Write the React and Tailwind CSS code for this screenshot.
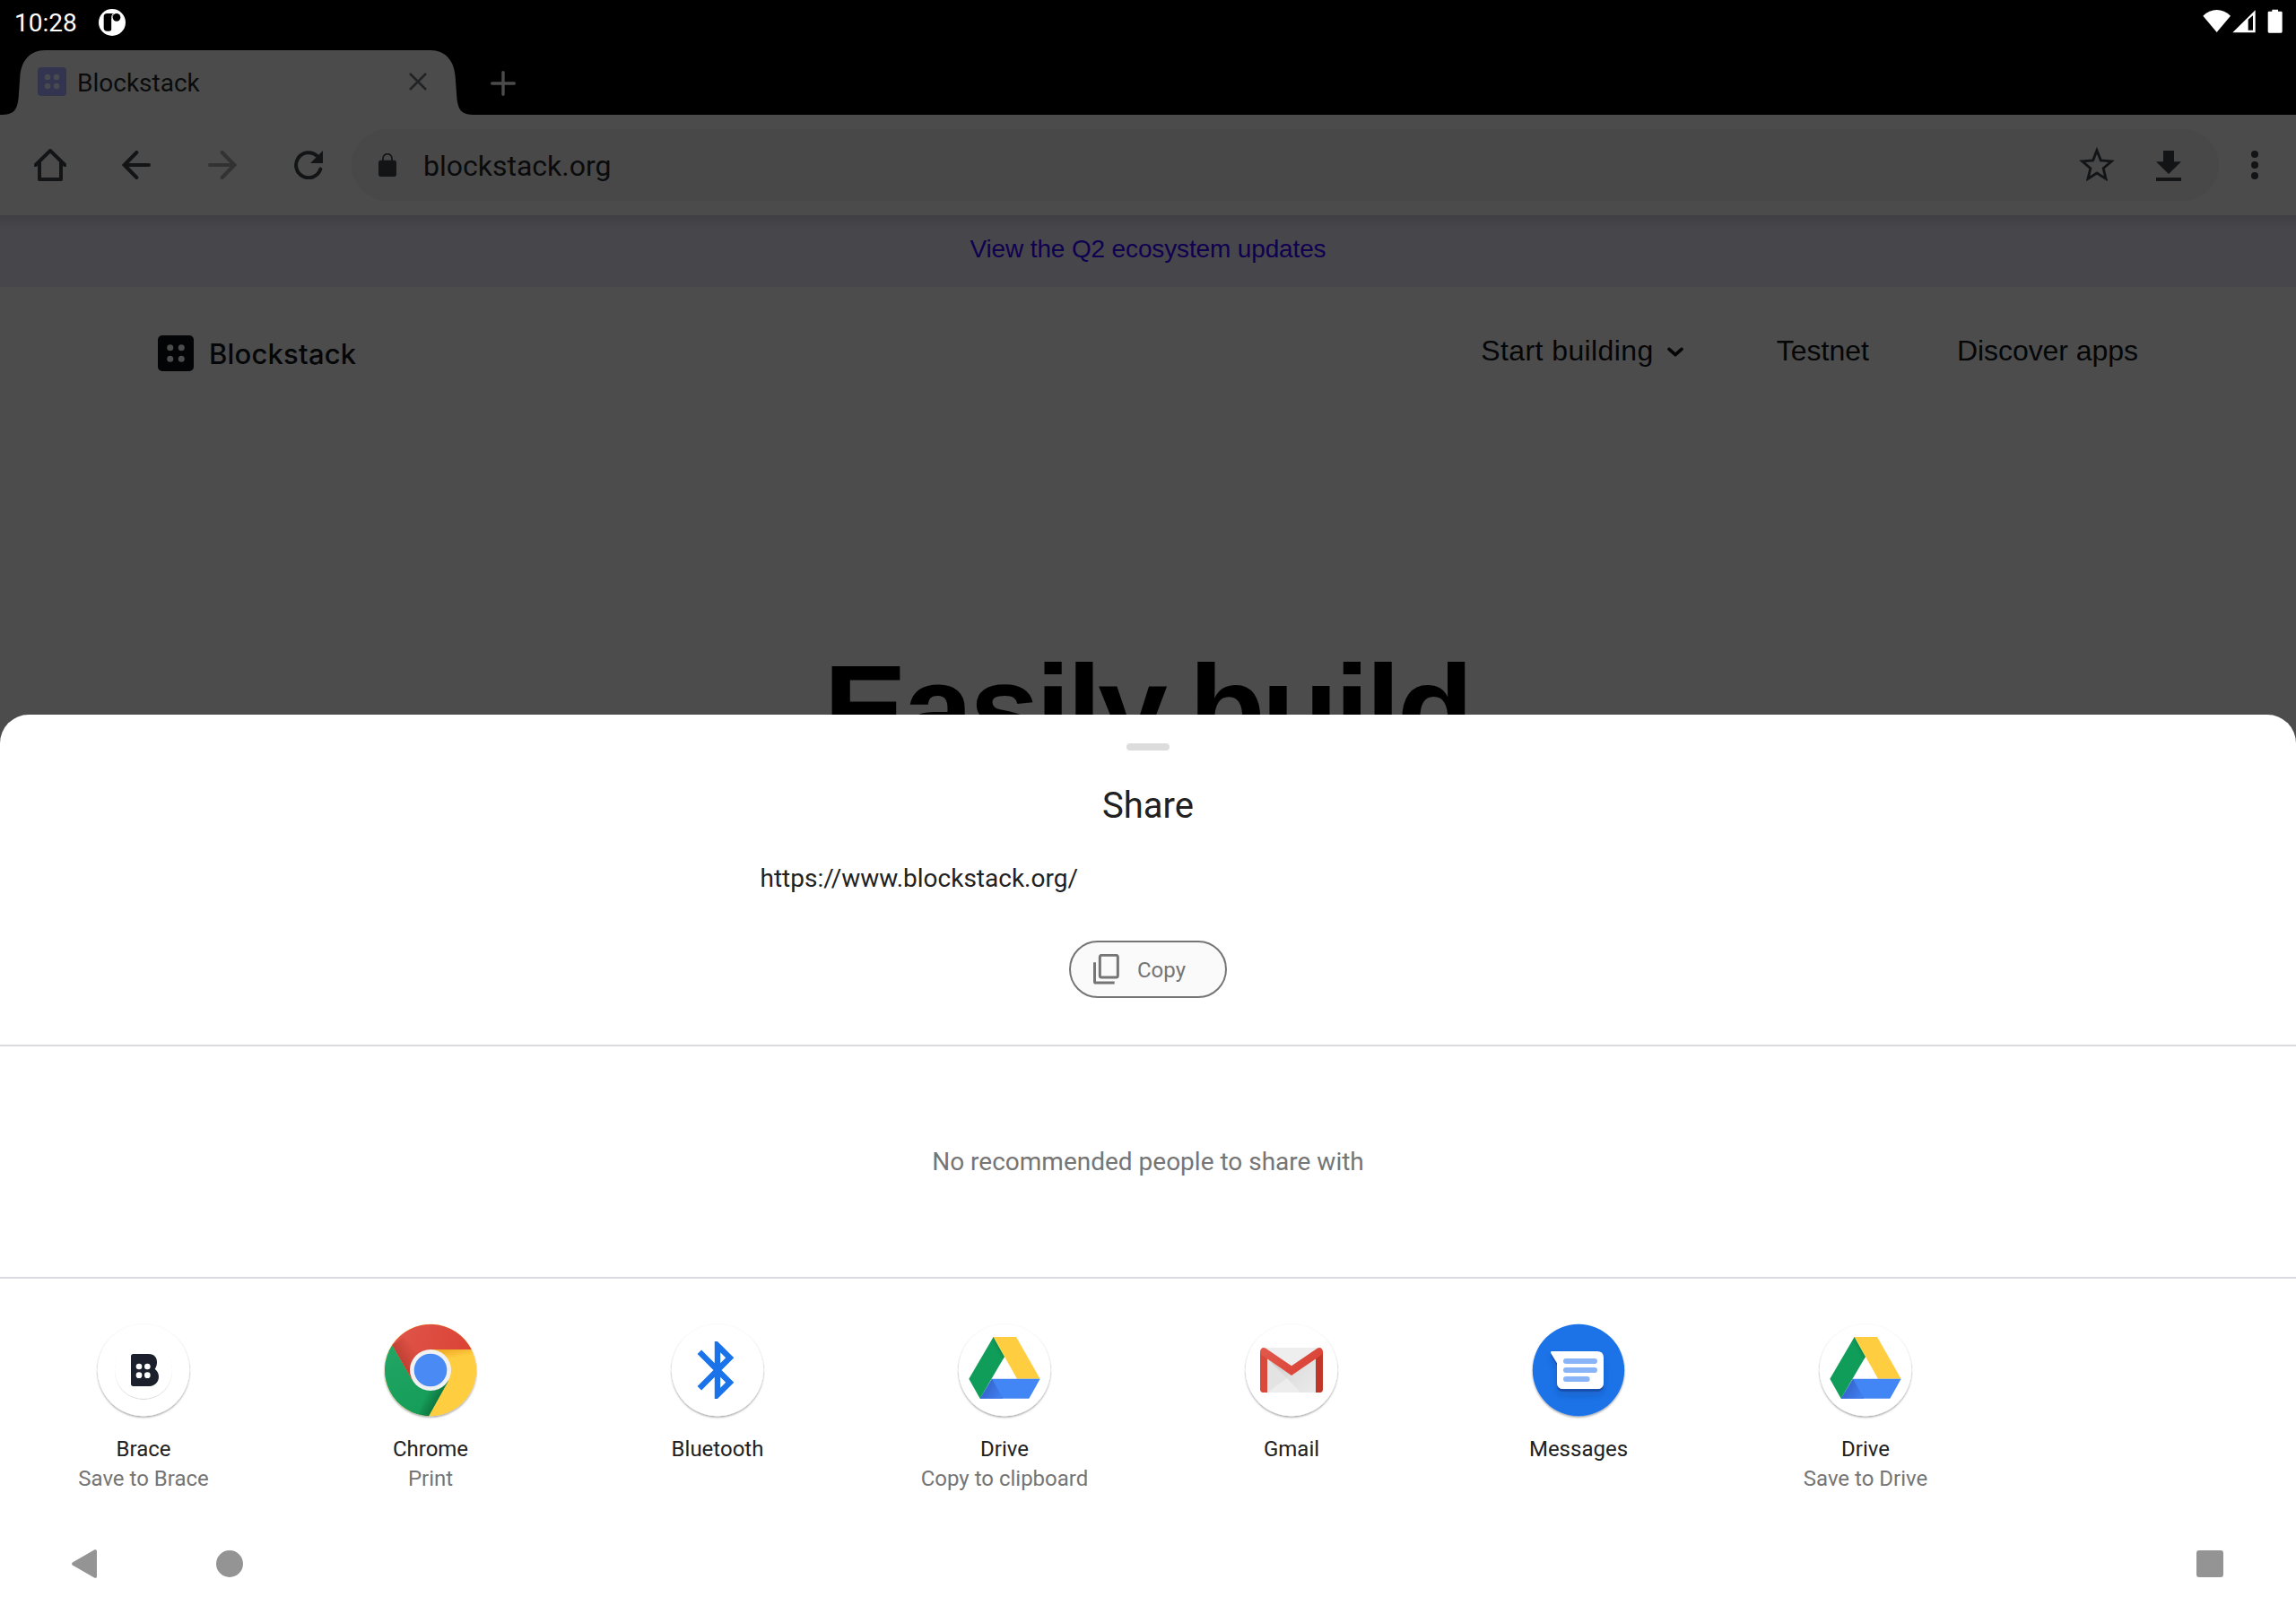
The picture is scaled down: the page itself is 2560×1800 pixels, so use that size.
import React from "react";

/* ---------- status bar icons ---------- */

function PocketIcon() {
  return (
    <svg className="h-[30px] w-[30px]" viewBox="330 27 90 90">
      <circle cx="375" cy="72" r="45" fill="#fff" />
      <rect x="347" y="42" width="28" height="59" rx="11" fill="#000" />
      <circle cx="390" cy="55" r="13" fill="#000" />
      <path d="M360 42h20l-5 14h-12z" fill="#000" />
      <path d="M374 101V58q0-10 4-15" fill="none" stroke="#fff" strokeWidth="3" />
    </svg>
  );
}

function StatusIcons() {
  return (
    <svg className="h-[27px] w-[90px]" viewBox="466 31 270 81">
      <path d="M467 54C493 27 533 27 559 54L513 109Z" fill="#fff" />
      <path fillRule="evenodd" d="M566 110L642 35V110ZM618 66V102H634V53Z" fill="#fff" />
      <path d="M698 33h20v6h10q4 0 4 4v64q0 4-4 4h-40q-4 0-4-4V43q0-4 4-4h10z" fill="#fff" />
    </svg>
  );
}

/* ---------- browser icons ---------- */

function DotsTile({ className, tile, dot, r }) {
  return (
    <svg className={className} viewBox="0 0 96 96">
      <rect width="96" height="96" rx="12" fill={tile} />
      <g fill={dot}>
        <circle cx="33" cy="33" r={r} />
        <circle cx="63" cy="33" r={r} />
        <circle cx="33" cy="63" r={r} />
        <circle cx="63" cy="63" r={r} />
      </g>
    </svg>
  );
}

function CloseIcon() {
  return (
    <svg className="h-5 w-5" viewBox="0 0 20 20" fill="none" stroke="#212325" strokeWidth="2.6">
      <path d="M1 1l18 18M19 1L1 19" />
    </svg>
  );
}

function PlusIcon() {
  return (
    <svg className="h-7 w-7" viewBox="0 0 28 28" fill="none" stroke="#4b4b4b" strokeWidth="3.4" strokeLinecap="round">
      <path d="M14 1.7v24.6M1.7 14h24.6" />
    </svg>
  );
}

function HomeIcon() {
  return (
    <svg className="h-9 w-9" viewBox="114 498 108 108" fill="none" stroke="#121416" strokeWidth="12" strokeLinecap="round">
      <path d="M119 552L168 504L217 552" strokeLinejoin="miter" />
      <path d="M132 545V600H204V545" strokeLinejoin="round" />
    </svg>
  );
}

function BackIcon() {
  return (
    <svg className="h-8 w-8" viewBox="0 0 96 96" fill="none" stroke="#121416" strokeWidth="12" strokeLinecap="round">
      <path d="M90 48H10M49 6L8 48L49 90" />
    </svg>
  );
}

function ForwardIcon() {
  return (
    <svg className="h-8 w-8" viewBox="0 0 96 96" fill="none" stroke="#323232" strokeWidth="12" strokeLinecap="round">
      <path d="M6 48H86M47 6L88 48L47 90" />
    </svg>
  );
}

function ReloadIcon() {
  return (
    <svg className="h-8 w-8" viewBox="984 504 96 96">
      <path d="M1060 521A42 42 0 1 0 1072 566" fill="none" stroke="#121416" strokeWidth="12" strokeLinecap="round" />
      <path d="M1080 504V546H1038Z" fill="#121416" />
    </svg>
  );
}

function LockIcon() {
  return (
    <svg className="h-[26px] w-5" viewBox="1266 513 60 78">
      <rect x="1266" y="536" width="60" height="55" rx="8" fill="#121416" />
      <path d="M1281 540V530a15 15 0 0 1 30 0V540" fill="none" stroke="#121416" strokeWidth="5" />
    </svg>
  );
}

function StarIcon() {
  return (
    <svg className="h-[38px] w-10" viewBox="54 492 120 114">
      <path
        d="M114 503L127 536.5L163 539.500L135.500 563L144 598L114 579L84 598L92.500 563L65 539.500L101 536.500Z"
        fill="none"
        stroke="#121416"
        strokeWidth="8.500"
      />
    </svg>
  );
}

function DownloadIcon() {
  return (
    <svg className="h-[34px] w-7" viewBox="312 504 84 102" fill="#121416">
      <path d="M336 504H372V541H396L354 582L312 541H336Z" />
      <rect x="312" y="594" width="84" height="12" />
    </svg>
  );
}

function MenuIcon() {
  return (
    <svg className="h-8 w-2" viewBox="0 0 8 32" fill="#121416">
      <circle cx="4" cy="4" r="4" />
      <circle cx="4" cy="16" r="4" />
      <circle cx="4" cy="28" r="4" />
    </svg>
  );
}

function ChevronIcon() {
  return (
    <svg className="mt-[3px] h-[12px] w-[18px]" viewBox="657 86 54 36" fill="none" stroke="#050607" strokeWidth="11" strokeLinecap="round" strokeLinejoin="round">
      <path d="M663 93L684 112L705 93" />
    </svg>
  );
}

function CopyIcon() {
  return (
    <svg className="h-[34px] w-[29px]" viewBox="117 72 87 102" fill="none" stroke="#757575" strokeWidth="9">
      <rect x="139" y="76" width="60" height="74" rx="6" />
      <path d="M121.500 100V164q0 4 4 4H188" />
    </svg>
  );
}

/* ---------- share targets ---------- */

function AppCircle({ fill, children }) {
  return (
    <svg className="h-[110px] w-[110px] overflow-visible" viewBox="-165 -165 330 330">
      <defs>
        <filter id="lift" x="-20%" y="-20%" width="140%" height="140%">
          <feDropShadow dx="0" dy="4" stdDeviation="3.500" floodColor="#000" floodOpacity="0.4" />
        </filter>
      </defs>
      <circle r="153.500" fill={fill} filter="url(#lift)" />
      {children}
    </svg>
  );
}

function BraceIcon() {
  return (
    <AppCircle fill="#fff">
      <defs>
        <filter id="lift-soft" x="-20%" y="-20%" width="140%" height="140%">
          <feDropShadow dx="0" dy="2" stdDeviation="2" floodColor="#000" floodOpacity="0.25" />
        </filter>
      </defs>
      <circle r="96" fill="#fff" filter="url(#lift-soft)" />
      <path
        d="M-34 -54H18C36 -54 45 -42 45 -26C45 -16 42 -9 38 -4C46 2 51 11 51 22C51 40 38 54 20 54H-34Q-42 54 -42 46V-46Q-42 -54 -34 -54Z"
        fill="#1b202c"
      />
      <g fill="#fff">
        <circle cx="-15" cy="-12" r="10" />
        <circle cx="13" cy="-12" r="10" />
        <circle cx="-15" cy="17" r="10" />
        <circle cx="13" cy="17" r="10" />
      </g>
    </AppCircle>
  );
}

function ChromeIcon() {
  return (
    <AppCircle fill="#ffcd40">
      <defs>
        <linearGradient id="chrome-red" gradientUnits="userSpaceOnUse" x1="-100" y1="-35" x2="-50" y2="-64">
          <stop offset="0" stopColor="#b73a2e" stopOpacity="0.75" />
          <stop offset="1" stopColor="#b73a2e" stopOpacity="0" />
        </linearGradient>
        <linearGradient id="chrome-green" gradientUnits="userSpaceOnUse" x1="30" y1="90" x2="-8" y2="69">
          <stop offset="0" stopColor="#0b6b3a" stopOpacity="0.75" />
          <stop offset="1" stopColor="#0b6b3a" stopOpacity="0" />
        </linearGradient>
        <linearGradient id="chrome-yellow" gradientUnits="userSpaceOnUse" x1="60" y1="-69" x2="66" y2="-38">
          <stop offset="0" stopColor="#ea9f1e" stopOpacity="0.7" />
          <stop offset="1" stopColor="#ea9f1e" stopOpacity="0" />
        </linearGradient>
        <linearGradient id="chrome-top" x1="0" y1="0" x2="1" y2="0.300">
          <stop offset="0" stopColor="#e0554a" />
          <stop offset="1" stopColor="#db4437" />
        </linearGradient>
        <linearGradient id="chrome-left" x1="0" y1="0" x2="0.500" y2="1">
          <stop offset="0" stopColor="#23a566" />
          <stop offset="1" stopColor="#159d58" />
        </linearGradient>
      </defs>
      <path d="M0 -69H137L148 -38L20 -38Z" fill="url(#chrome-yellow)" />
      <path d="M-128 -84L-60 35L0 0L60 35L-6 153.500A153.500 153.500 0 0 1 -128 -84Z" fill="url(#chrome-left)" />
      <path d="M60 35L-6 153.500L-40 148L0 50Z" fill="url(#chrome-green)" />
      <path d="M-128 -84A153.500 153.500 0 0 1 137 -69H0V0L-60 35Z" fill="url(#chrome-top)" />
      <path d="M-128 -84L-60 35L-20 -40L-90 -110Z" fill="url(#chrome-red)" />
      <circle r="69" fill="#f1f1f1" />
      <circle r="55" fill="#4a8af4" />
    </AppCircle>
  );
}

function BluetoothIcon() {
  return (
    <AppCircle fill="#fff">
      <path
        transform="scale(9.600) translate(-12 -12)"
        fill="#1a73e8"
        d="M17.710 7.710L12 2h-1v7.590L6.410 5 5 6.410 10.590 12 5 17.590 6.410 19 11 14.410V22h1l5.710-5.710-4.300-4.290 4.300-4.290zM13 5.830l1.880 1.880L13 9.590V5.830zm1.880 10.460L13 18.170v-3.760l1.880 1.880z"
      />
    </AppCircle>
  );
}

function DriveIcon() {
  return (
    <AppCircle fill="#fff">
      <defs>
        <linearGradient id="drive-fold" gradientUnits="userSpaceOnUse" x1="-30" y1="-68" x2="-4" y2="-82">
          <stop offset="0" stopColor="#0b7a44" stopOpacity="0" />
          <stop offset="1" stopColor="#0b6a3a" stopOpacity="0.800" />
        </linearGradient>
        <linearGradient id="drive-base" gradientUnits="userSpaceOnUse" x1="-62" y1="62" x2="-20" y2="85">
          <stop offset="0" stopColor="#3668d0" />
          <stop offset="1" stopColor="#3f7cec" />
        </linearGradient>
      </defs>
      <path d="M-37 -111L0 -45L-82 95L-119 29Z" fill="#109d59" />
      <path d="M-37 -111L0 -45L-12 -25L-48 -90Z" fill="url(#drive-fold)" />
      <path d="M-37 -111H39L119 29H42Z" fill="#ffcd40" />
      <path d="M-42 29H119L82 95H-82Z" fill="#4285f4" />
      <path d="M-42 29L-5 95H-82Z" fill="url(#drive-base)" />
    </AppCircle>
  );
}

function GmailIcon() {
  return (
    <AppCircle fill="#fff">
      <defs>
        <linearGradient id="gmail-m" x1="0" y1="0" x2="1" y2="0.500">
          <stop offset="0" stopColor="#e25a4d" />
          <stop offset="1" stopColor="#da4336" />
        </linearGradient>
        <linearGradient id="gmail-shade" gradientUnits="userSpaceOnUse" x1="-60" y1="-20" x2="60" y2="75">
          <stop offset="0" stopColor="#cfcfcf" />
          <stop offset="0.500" stopColor="#e0e0e0" />
          <stop offset="1" stopColor="#e9e9e9" />
        </linearGradient>
      </defs>
      <rect x="-95" y="-75" width="190" height="150" fill="#eeeeee" />
      <path d="M-81 -37L30 75H81V-40L0 17Z" fill="url(#gmail-shade)" />
      <path d="M-81 75L-15 27L30 75Z" fill="#ededed" />
      <path d="M-15 27L-81 -37V75Z" fill="#e3e3e3" />
      <path d="M-105 -63L-81 -44V75H-95Q-105 75 -105 64Z" fill="#d9493c" />
      <path d="M105 -63L81 -44V75H95Q105 75 105 64Z" fill="#c0372a" />
      <path
        d="M-86 -73L0 -14L86 -73C95 -79 105 -72 105 -62C105 -56 102 -52 97 -49L0 18L-97 -49C-102 -52 -105 -56 -105 -62C-105 -72 -95 -79 -86 -73Z"
        fill="url(#gmail-m)"
      />
    </AppCircle>
  );
}

function MessagesIcon() {
  return (
    <AppCircle fill="#1a73e8">
      <defs>
        <filter id="bubble" x="-30%" y="-30%" width="160%" height="180%">
          <feDropShadow dx="0" dy="9" stdDeviation="1" floodColor="#174ea6" floodOpacity="0.8" />
          <feDropShadow dx="0" dy="14" stdDeviation="12" floodColor="#174ea6" floodOpacity="0.45" />
        </filter>
      </defs>
      <path
        d="M-89 -63H62Q84 -63 84 -41V41Q84 63 62 63H-50Q-72 63 -72 41V-24L-92 -56Q-95 -63 -89 -63Z"
        fill="#fff"
        filter="url(#bubble)"
      />
      <g stroke="#8ab4f8" strokeWidth="18" strokeLinecap="round">
        <path d="M-42 -30H54M-42 0H54M-42 30H29" />
      </g>
    </AppCircle>
  );
}

const targets = [
  { Icon: BraceIcon, name: "Brace", action: "Save to Brace" },
  { Icon: ChromeIcon, name: "Chrome", action: "Print" },
  { Icon: BluetoothIcon, name: "Bluetooth" },
  { Icon: DriveIcon, name: "Drive", action: "Copy to clipboard" },
  { Icon: GmailIcon, name: "Gmail" },
  { Icon: MessagesIcon, name: "Messages" },
  { Icon: DriveIcon, name: "Drive", action: "Save to Drive" },
];

/* ---------- sections ---------- */

function StatusBar() {
  return (
    <div className="flex h-[56px] items-start justify-between bg-black pl-[16px] pr-[14px] text-white">
      <div className="flex items-center">
        <span className="w-[94px] pt-[2px] text-[28px] leading-[48px]">10:28</span>
        <PocketIcon />
      </div>
      <div className="pt-[10px]">
        <StatusIcons />
      </div>
    </div>
  );
}

function TabStrip() {
  return (
    <div className="flex h-[72px] bg-black">
      <div className="relative flex h-full w-[530px] items-center">
        <svg className="absolute inset-0 h-full w-full" viewBox="0 0 530 72">
          <path
            d="M0 72C16 72 20 67 21 48L22.300 30C23.500 11 34 0 50 0H480C496 0 506.500 11 507.700 30L509 48C510 67 514 72 530 72Z"
            fill="#4b4b4b"
          />
        </svg>
        <div className="relative flex w-full items-center pb-[2px] pl-[42px]">
          <DotsTile className="h-8 w-8" tile="#33344f" dot="#484a50" r="10" />
          <span className="ml-[12px] mt-[3px] w-[370px] text-[28px] leading-[40px] text-[#0a0b0c]">Blockstack</span>
          <CloseIcon />
        </div>
      </div>
      <div className="flex h-full items-center pl-[17px] pt-px">
        <PlusIcon />
      </div>
    </div>
  );
}

function Toolbar() {
  return (
    <div className="flex h-[112px] items-center bg-[#4b4b4b] pl-2">
      <div className="flex w-24 justify-center">
        <HomeIcon />
      </div>
      <div className="flex w-24 justify-center">
        <BackIcon />
      </div>
      <div className="flex w-24 justify-center">
        <ForwardIcon />
      </div>
      <div className="flex w-24 justify-center">
        <ReloadIcon />
      </div>
      <div className="flex h-20 flex-1 items-center rounded-full bg-[#484848] pl-[30px] pr-4">
        <LockIcon />
        <span className="ml-[30px] flex-1 pt-[2px] text-[32px] leading-[40px] text-[#0a0b0c]">blockstack.org</span>
        <div className="flex w-20 justify-center pb-[3px]">
          <StarIcon />
        </div>
        <div className="flex w-20 justify-center pt-[2px]">
          <DownloadIcon />
        </div>
      </div>
      <div className="mr-[6px] flex w-20 justify-center">
        <MenuIcon />
      </div>
    </div>
  );
}

function WebPage() {
  return (
    <div className="bg-[#4c4c4c] text-[#050607]">
      <div className="h-20 bg-[#47464b]">
        <div className="flex h-full justify-center bg-linear-to-b from-[#404044] to-transparent to-20%">
          <span className="pt-[2px] font-['Liberation_Sans',sans-serif] text-[28px] leading-[72px] tracking-[-0.14px] text-[#0f0050]">
            View the Q2 ecosystem updates
          </span>
        </div>
      </div>
      <div className="flex h-[148px] items-center justify-between pl-[176px] pr-[176px]">
        <div className="flex items-center">
          <DotsTile className="h-10 w-10" tile="#030406" dot="#4c4c4c" r="8.500" />
          <span className="ml-[17px] mt-[2px] font-['Inter',sans-serif] text-[31px] font-medium leading-[40px] tracking-[0.2px]">
            Blockstack
          </span>
        </div>
        <div className="flex items-center pb-[6px] font-['Liberation_Sans',sans-serif] text-[32px] leading-[40px]">
          <span className="mr-[15px] tracking-[0.4px]">Start building</span>
          <ChevronIcon />
          <span className="ml-[104px]">Testnet</span>
          <span className="ml-[98px] tracking-[-0.05px]">Discover apps</span>
        </div>
      </div>
      <h1 className="pr-[3px] pt-[243px] text-center font-['Liberation_Sans',sans-serif] text-[140px] font-bold leading-[160px] tracking-[-4.2px] [word-spacing:-7px] text-black">
        Easily build
      </h1>
    </div>
  );
}

function ShareSheet() {
  return (
    <div className="absolute inset-x-0 bottom-0 flex h-[1003px] flex-col rounded-t-[32px] bg-white pt-8">
      <div className="mx-auto h-2 w-12 shrink-0 rounded-[4px] bg-[#dcdcdc]" />
      <h2 className="text-center text-[40px] leading-[123px] text-[#212121]">Share</h2>
      <p className="mx-auto w-[865px] text-[28px] leading-[39px] text-[#212121]">https://www.blockstack.org/</p>
      <button className="mx-auto mt-[50px] flex h-16 w-44 shrink-0 items-center rounded-full border-2 border-[#757575] bg-[#fafafa] pl-[25px] text-[24px] leading-[32px] text-[#757575]">
        <CopyIcon />
        <span className="ml-[20px] pt-[2px]">Copy</span>
      </button>
      <div className="mt-[52px] flex h-[261px] shrink-0 items-center justify-center border-y-2 border-[#dadae0] text-[28px] text-[#757575]">
        No recommended people to share with
      </div>
      <div className="grid grid-cols-8 pt-[47px]">
        {targets.map(({ Icon, name, action }, i) => (
          <div key={i} className="flex flex-col items-center text-[24px] leading-[33px] text-[#212121]">
            <Icon />
            <span className="mt-[17px]">{name}</span>
            {action && <span className="text-[#757575]">{action}</span>}
          </div>
        ))}
      </div>
      <div className="mt-auto flex h-28 shrink-0 items-center pl-[80px] pr-[81px]">
        <svg className="h-8 w-7" viewBox="0 0 28 32" fill="#949494">
          <path d="M0.800 14.600L25.500 0.300Q28 -0.400 28 2V30Q28 32.400 25.500 31.700L0.800 17.400Q-0.700 16 0.800 14.600Z" />
        </svg>
        <div className="ml-[133px] h-[30px] w-[30px] rounded-full bg-[#949494]" />
        <div className="ml-auto h-[30px] w-[30px] rounded-[3px] bg-[#949494]" />
      </div>
    </div>
  );
}

export default function App() {
  return (
    <div className="relative h-[1800px] w-[2560px] overflow-hidden bg-[#4c4c4c] font-['Roboto',sans-serif]">
      <StatusBar />
      <TabStrip />
      <Toolbar />
      <WebPage />
      <ShareSheet />
    </div>
  );
}
